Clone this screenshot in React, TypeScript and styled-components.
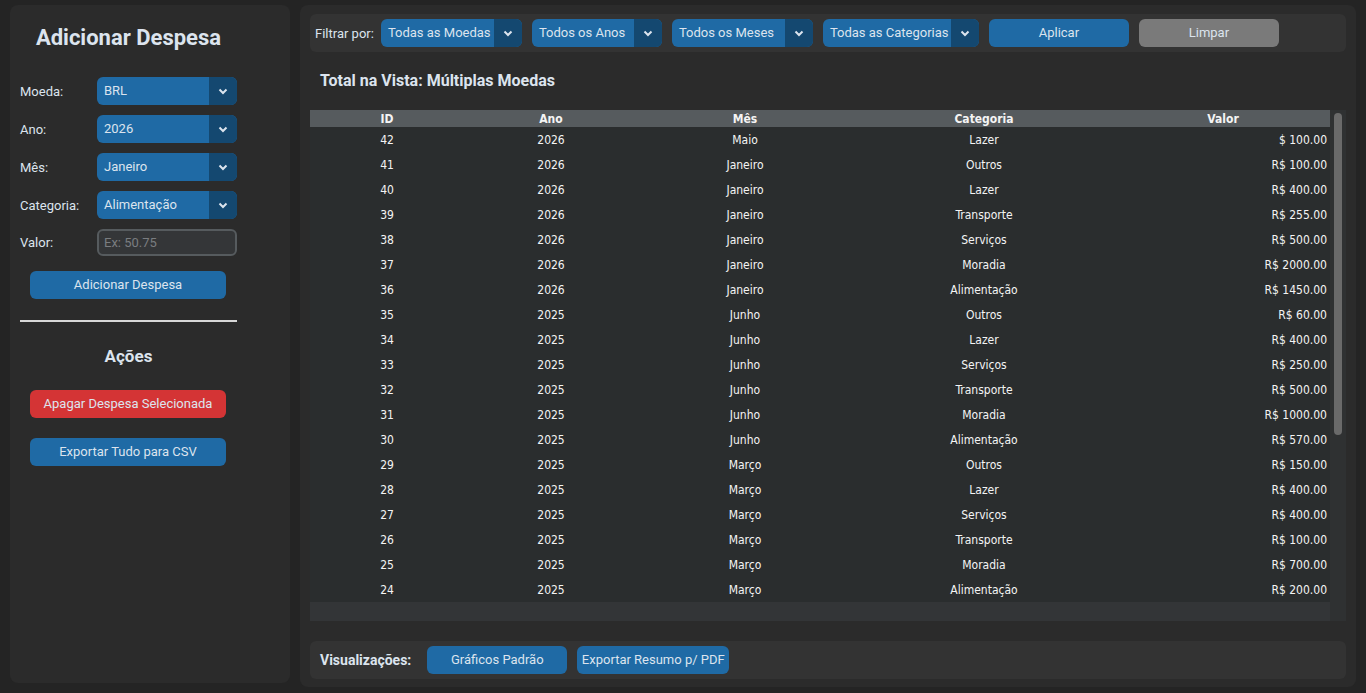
import styled, { createGlobalStyle } from 'styled-components';

const GlobalStyle = createGlobalStyle`
  html, body {
    margin: 0;
    padding: 0;
    background: #242424;
    font-family: Roboto, "Noto Sans", sans-serif;
    color: #dce4ee;
  }
  * { box-sizing: border-box; }
`;

const rows = [
  ['42', '2026', 'Maio', 'Lazer', '$ 100.00'],
  ['41', '2026', 'Janeiro', 'Outros', 'R$ 100.00'],
  ['40', '2026', 'Janeiro', 'Lazer', 'R$ 400.00'],
  ['39', '2026', 'Janeiro', 'Transporte', 'R$ 255.00'],
  ['38', '2026', 'Janeiro', 'Serviços', 'R$ 500.00'],
  ['37', '2026', 'Janeiro', 'Moradia', 'R$ 2000.00'],
  ['36', '2026', 'Janeiro', 'Alimentação', 'R$ 1450.00'],
  ['35', '2025', 'Junho', 'Outros', 'R$ 60.00'],
  ['34', '2025', 'Junho', 'Lazer', 'R$ 400.00'],
  ['33', '2025', 'Junho', 'Serviços', 'R$ 250.00'],
  ['32', '2025', 'Junho', 'Transporte', 'R$ 500.00'],
  ['31', '2025', 'Junho', 'Moradia', 'R$ 1000.00'],
  ['30', '2025', 'Junho', 'Alimentação', 'R$ 570.00'],
  ['29', '2025', 'Março', 'Outros', 'R$ 150.00'],
  ['28', '2025', 'Março', 'Lazer', 'R$ 400.00'],
  ['27', '2025', 'Março', 'Serviços', 'R$ 400.00'],
  ['26', '2025', 'Março', 'Transporte', 'R$ 100.00'],
  ['25', '2025', 'Março', 'Moradia', 'R$ 700.00'],
  ['24', '2025', 'Março', 'Alimentação', 'R$ 200.00'],
];

const COLS = '154px 174px 214px 264px 1fr';

const Screen = styled.div`
  display: flex;
  gap: 10px;
  height: 693px;
  padding: 5px 10px 6px 10px;
`;

const Sidebar = styled.aside`
  width: 280px;
  height: 678px;
  background: #2b2b2b;
  border-radius: 8px;
  padding: 0 10px;
  display: flex;
  flex-direction: column;
`;

const SideColumn = styled.div`
  width: 217px;
  display: flex;
  flex-direction: column;
`;

const Title = styled.h1`
  margin: 20px 0 0;
  height: 26px;
  font-size: 22px;
  font-weight: 700;
  text-align: center;
  line-height: 26px;
  color: #dce4ee;
`;

const Form = styled.div`
  margin-top: 26px;
  display: grid;
  grid-template-columns: 77px 140px;
  row-gap: 10px;
  align-items: center;
`;

const Label = styled.span`
  font-size: 13px;
  color: #dce4ee;
`;

const Menu = styled.div<{ $w: number }>`
  width: ${p => p.$w}px;
  height: 28px;
  display: flex;
  border-radius: 6px;
  overflow: hidden;
  background: #1f6aa5;
  font-size: 13px;
  color: #dce4ee;
  flex-shrink: 0;
`;

const MenuText = styled.span`
  flex: 1;
  padding-left: 7px;
  padding-bottom: 1px;
  display: flex;
  align-items: center;
  white-space: nowrap;
`;

const MenuArrow = styled.span`
  width: 28px;
  display: flex;
  align-items: center;
  justify-content: center;
  background: #144870;
`;

const Entry = styled.div`
  width: 140px;
  height: 27px;
  border: 2px solid #565b5e;
  border-radius: 6px;
  background: #343638;
  color: #7a7d80;
  font-size: 13px;
  padding-left: 5px;
  display: flex;
  align-items: center;
`;

const Button = styled.div<{ $w: number; $bg?: string }>`
  width: ${p => p.$w}px;
  height: 28px;
  border-radius: 6px;
  background: ${p => p.$bg || '#1f6aa5'};
  color: #dce4ee;
  font-size: 13px;
  display: flex;
  align-items: center;
  justify-content: center;
  padding-bottom: 1px;
  white-space: nowrap;
  flex-shrink: 0;
`;

const SideButton = styled(Button)<{ $top: number }>`
  margin: ${p => p.$top}px 0 0 10px;
`;

const Divider = styled.hr`
  margin: 21px 0 0;
  border: none;
  height: 2px;
  background: #d8d8d8;
`;

const SubTitle = styled.h2`
  margin: 24px 0 0;
  height: 20px;
  line-height: 20px;
  font-size: 17px;
  font-weight: 700;
  text-align: center;
  color: #dce4ee;
`;

const Main = styled.main`
  flex: 1;
  height: 682px;
  background: #2b2b2b;
  border-radius: 8px;
  padding: 9px 10px 0;
  display: flex;
  flex-direction: column;
`;

const Bar = styled.div`
  height: 38px;
  background: #333333;
  border-radius: 6px;
  display: flex;
  align-items: center;
  gap: 10px;
  padding-left: 5px;
`;

const FilterLabel = styled.span`
  font-size: 13px;
  color: #dce4ee;
  margin-right: -3px;
`;

const ViewLabel = styled.span`
  font-size: 14px;
  font-weight: 700;
  color: #dce4ee;
  margin-right: 6px;
`;

const ViewTitle = styled.h3`
  margin: 19px 0 0 10px;
  height: 20px;
  line-height: 20px;
  font-size: 16px;
  font-weight: 700;
  color: #dce4ee;
`;

const TableWrap = styled.div`
  margin-top: 19px;
  height: 511px;
  display: flex;
`;

const Table = styled.div`
  flex: 1;
  display: flex;
  flex-direction: column;
  font-family: "DejaVu Sans Condensed", "DejaVu Sans", sans-serif;
  font-size: 12px;
  color: #f4f4f4;
`;

const Row = styled.div<{ $head?: boolean }>`
  display: grid;
  grid-template-columns: ${COLS};
  height: ${p => (p.$head ? 17 : 25)}px;
  align-items: center;
  background: ${p => (p.$head ? '#565b5e' : '#2a2d2e')};
  font-weight: ${p => (p.$head ? 700 : 400)};
`;

const Cell = styled.span<{ $right?: boolean }>`
  text-align: ${p => (p.$right ? 'right' : 'center')};
  padding-right: ${p => (p.$right ? 3 : 0)}px;
  white-space: nowrap;
`;

const TableFoot = styled.div`
  flex: 1;
  background: #333537;
`;

const Track = styled.div`
  width: 16px;
  background: #2f3132;
  padding: 3px 4px 0;
`;

const Thumb = styled.div`
  height: 322px;
  border-radius: 4px;
  background: #6a6a6a;
`;

const BottomBar = styled(Bar)`
  margin-top: 20px;
  padding-left: 10px;
`;

const Chevron = () => (
  <svg width="10" height="7" viewBox="0 0 10 7">
    <polyline points="1.5,1.5 5,5 8.5,1.5" fill="none" stroke="#dce4ee" strokeWidth="2" />
  </svg>
);

const Select = ({ w, text }: { w: number; text: string }) => (
  <Menu $w={w}>
    <MenuText>{text}</MenuText>
    <MenuArrow>
      <Chevron />
    </MenuArrow>
  </Menu>
);

export default function App() {
  return (
    <>
      <GlobalStyle />
      <Screen>
        <Sidebar>
          <SideColumn>
            <Title>Adicionar Despesa</Title>
            <Form>
              <Label>Moeda:</Label>
              <Select w={140} text="BRL" />
              <Label>Ano:</Label>
              <Select w={140} text="2026" />
              <Label>Mês:</Label>
              <Select w={140} text="Janeiro" />
              <Label>Categoria:</Label>
              <Select w={140} text="Alimentação" />
              <Label>Valor:</Label>
              <Entry>Ex: 50.75</Entry>
            </Form>
            <SideButton $w={196} $top={15}>Adicionar Despesa</SideButton>
            <Divider />
            <SubTitle>Ações</SubTitle>
            <SideButton $w={196} $top={24} $bg="#d43435">Apagar Despesa Selecionada</SideButton>
            <SideButton $w={196} $top={20}>Exportar Tudo para CSV</SideButton>
          </SideColumn>
        </Sidebar>
        <Main>
          <Bar>
            <FilterLabel>Filtrar por:</FilterLabel>
            <Select w={141} text="Todas as Moedas" />
            <Select w={130} text="Todos os Anos" />
            <Select w={141} text="Todos os Meses" />
            <Select w={156} text="Todas as Categorias" />
            <Button $w={140}>Aplicar</Button>
            <Button $w={140} $bg="#7a7a7a">Limpar</Button>
          </Bar>
          <ViewTitle>Total na Vista: Múltiplas Moedas</ViewTitle>
          <TableWrap>
            <Table>
              <Row $head>
                <Cell>ID</Cell>
                <Cell>Ano</Cell>
                <Cell>Mês</Cell>
                <Cell>Categoria</Cell>
                <Cell>Valor</Cell>
              </Row>
              {rows.map(r => (
                <Row key={r[0]}>
                  <Cell>{r[0]}</Cell>
                  <Cell>{r[1]}</Cell>
                  <Cell>{r[2]}</Cell>
                  <Cell>{r[3]}</Cell>
                  <Cell $right>{r[4]}</Cell>
                </Row>
              ))}
              <TableFoot />
            </Table>
            <Track>
              <Thumb />
            </Track>
          </TableWrap>
          <BottomBar>
            <ViewLabel>Visualizações:</ViewLabel>
            <Button $w={140}>Gráficos Padrão</Button>
            <Button $w={152}>Exportar Resumo p/ PDF</Button>
          </BottomBar>
        </Main>
      </Screen>
    </>
  );
}
